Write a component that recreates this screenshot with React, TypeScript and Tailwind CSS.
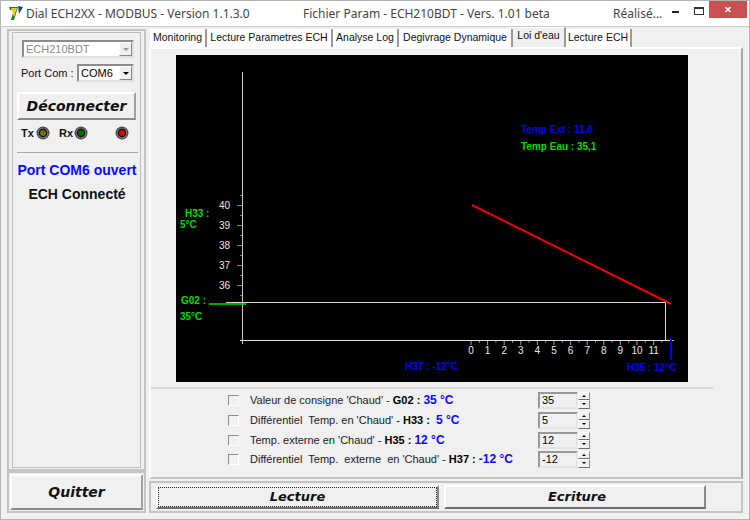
import React from "react";

const uiFont = "font-['Liberation_Sans',sans-serif]";
const raised = "border border-t-white border-l-white border-r-[#8c8c8c] border-b-[#6e6e6e]";
const sunken = "border border-t-[#8c8c8c] border-l-[#8c8c8c] border-r-[#e0e0e0] border-b-[#e0e0e0]";

const tabs = [
  { label: "Monitoring", width: "w-[57px]" },
  { label: "Lecture Parametres ECH", width: "w-[126px]" },
  { label: "Analyse Log", width: "w-[66px]" },
  { label: "Degivrage Dynamique", width: "w-[114px]" },
  { label: "Loi d'eau", width: "w-[53px]", active: true },
  { label: "Lecture ECH", width: "w-[66px]" },
];

const params = [
  { text: "Valeur de consigne 'Chaud' - ", code: "G02 :", gap: " ", value: "35 °C", input: "35", mt: "mt-0" },
  { text: "Différentiel  Temp. en 'Chaud' - ", code: "H33 :", gap: "  ", value: "5 °C", input: "5", mt: "mt-1" },
  { text: "Temp. externe en 'Chaud' - ", code: "H35 :", gap: " ", value: "12 °C", input: "12", mt: "mt-1" },
  { text: "Différentiel  Temp.  externe  en 'Chaud' - ", code: "H37 :", gap: " ", value: "-12 °C", input: "-12", mt: "mt-[3px]" },
];

function Led({ color }: { color: string }) {
  return (
    <svg width="14" height="14" viewBox="0 0 14 14">
      <circle cx="7" cy="7" r="6.5" fill="#4a4a4a" />
      <circle cx="7" cy="7" r="5.2" fill="#8a8a8a" />
      <circle cx="7" cy="7" r="4.4" fill="#111" />
      <circle cx="7" cy="7" r="3" fill={color} />
    </svg>
  );
}

function Combo({ value, disabled, width }: { value: string; disabled?: boolean; width: string }) {
  return (
    <div className={`flex h-[18px] items-center justify-between bg-white ${sunken} border-2 ${width}`}>
      <span className={`pl-0.5 text-[11px] leading-none ${disabled ? "text-[#8a8a8a]" : "text-black"}`}>{value}</span>
      <span className="flex h-[14px] w-[13px] items-center justify-center border border-r-[#888] border-b-[#888] border-t-white border-l-white bg-[#f0f0f0]">
        <span className={`h-0 w-0 border-x-[3px] border-t-[3px] border-x-transparent ${disabled ? "border-t-[#999]" : "border-t-black"}`} />
      </span>
    </div>
  );
}

function Spin({ value }: { value: string }) {
  return (
    <div className="flex h-[17px]">
      <div className="flex w-[40px] items-center border-2 border-t-[#999] border-l-[#999] border-r-[#e4e4e4] border-b-[#e4e4e4] pl-0.5 text-[11px] text-black">
        {value}
      </div>
      <div className="flex w-[12px] flex-col">
        <span className={`flex h-1/2 items-center justify-center bg-[#f0f0f0] ${raised}`}>
          <span className="h-0 w-0 border-x-2 border-b-2 border-x-transparent border-b-black" />
        </span>
        <span className={`flex h-1/2 items-center justify-center bg-[#f0f0f0] ${raised}`}>
          <span className="h-0 w-0 border-x-2 border-t-2 border-x-transparent border-t-black" />
        </span>
      </div>
    </div>
  );
}

function Chart() {
  const yMajor = [
    { y: 150, label: "40" },
    { y: 170, label: "39" },
    { y: 190, label: "38" },
    { y: 210, label: "37" },
    { y: 230, label: "36" },
  ];
  const yMinor = [140, 160, 180, 200, 220, 240];
  const xLabels = Array.from({ length: 12 }, (_, i) => i);
  const xAt = (i: number) => 295 + i * 16.6;

  return (
    <svg width="512" height="327" viewBox="0 0 512 327" className="block bg-black">
      {/* axes */}
      <line x1="66.5" y1="17" x2="66.5" y2="289" stroke="#c8c8c8" />
      <line x1="64" y1="285.5" x2="498" y2="285.5" stroke="#e0e0e0" />

      {yMajor.map((t) => (
        <g key={t.y}>
          <line x1="61" y1={t.y + 0.5} x2="66" y2={t.y + 0.5} stroke="#808080" />
          <text x="43" y={t.y + 4} className="fill-[#e8e8e8] text-[10px]">
            {t.label}
          </text>
        </g>
      ))}
      {yMinor.map((y) => (
        <line key={y} x1="64" y1={y + 0.5} x2="66" y2={y + 0.5} stroke="#808080" />
      ))}

      {xLabels.map((i) => (
        <g key={i}>
          <line x1={xAt(i)} y1="286" x2={xAt(i)} y2="290" stroke="#a0a0a0" />
          <line x1={xAt(i) + 8.3} y1="286" x2={xAt(i) + 8.3} y2="288" stroke="#808080" />
          <text x={xAt(i)} y="299" textAnchor="middle" className="fill-[#e8e8e8] text-[10px]">
            {i}
          </text>
        </g>
      ))}

      {/* consigne */}
      <line x1="50" y1="247.5" x2="490" y2="247.5" stroke="#d8d8d8" />
      <line x1="489.5" y1="247" x2="489.5" y2="285" stroke="#d8d8d8" />
      <line x1="33" y1="249" x2="70" y2="249" stroke="#00e000" strokeWidth="1.5" />
      <line x1="296" y1="150" x2="495" y2="249" stroke="#f00000" strokeWidth="2" />
      <line x1="495" y1="283" x2="495" y2="305" stroke="#0000f0" strokeWidth="2" />

      <g className="text-[10px] font-bold">
        <text x="9" y="162" className="fill-[#00d800]">H33 :</text>
        <text x="4" y="173" className="fill-[#00d800]">5°C</text>
        <text x="5" y="249" className="fill-[#00d800]">G02 :</text>
        <text x="4" y="265" className="fill-[#00d800]">35°C</text>
        <text x="345" y="78" className="fill-[#0000f0]">Temp Ext : 11,6</text>
        <text x="345" y="95" className="fill-[#00d800]">Temp Eau : 35,1</text>
        <text x="229" y="315" className="fill-[#0000f0]">H37 : -12°C</text>
        <text x="451" y="316" className="fill-[#0000f0]">H35 : 12°C</text>
      </g>
    </svg>
  );
}

export default function App() {
  return (
    <div className={`flex h-[520px] w-[750px] flex-col overflow-hidden border border-[#b4b4b4] bg-white text-[#222] ${uiFont}`}>
      {/* title bar */}
      <div className="flex h-[25px] shrink-0 items-start font-['Noto_Sans',sans-serif] text-[12px] leading-[25px] text-[#444]">
        <svg width="16" height="16" viewBox="0 0 16 16" className="ml-[7px] mt-[4px] shrink-0">
          <path d="M1 2h9L6 15H3l3-10H2z" fill="#1f7f1f" />
          <path d="M3 3h6L6 12z" fill="#e8d020" />
          <path d="M10 1l5 1-4 7z" fill="#2040a0" />
        </svg>
        <span className="ml-[2px] w-[277px] shrink-0 whitespace-nowrap">Dial ECH2XX - MODBUS - Version 1.1.3.0</span>
        <span className="w-[310px] shrink-0 whitespace-nowrap">Fichier Param - ECH210BDT - Vers. 1.01 beta</span>
        <span className="w-[50px] shrink-0 whitespace-nowrap">Réalisé...</span>
        <div className="ml-[9px] flex items-start">
          <span className="mt-[10px] h-0.5 w-[7px] bg-[#222]" />
          <span className="ml-[15px] mt-[6px] h-[8px] w-[10px] border border-t-2 border-[#333]" />
          <span className="ml-[5px] flex h-[17px] w-[38px] items-center justify-center bg-[#c75050] text-[13px] font-bold leading-none text-white">
            ×
          </span>
        </div>
      </div>

      {/* body */}
      <div className="flex min-h-0 flex-1 border-t border-[#c8c8c8] bg-[#f0f0f0] px-[6px] pb-[6px]">
        {/* left column */}
        <div className="flex w-[139px] shrink-0 flex-col pt-[2px]">
          <div className="flex flex-1 flex-col border-2 border-[#c4c4c4] px-[3px] py-px">
            <div className="flex flex-1 flex-col border border-[#bdbdbd] pl-[4px] pr-[4px] pt-[7px]">
              <div className="ml-[5px]">
                <Combo value="ECH210BDT" disabled width="w-[112px]" />
              </div>
              <div className="mt-[6px] flex items-center">
                <span className="ml-1 w-[56px] text-[11px] text-[#111]">Port Com :</span>
                <Combo value="COM6" width="w-[57px]" />
              </div>
              <button className="mt-[10px] flex h-[28px] w-[119px] items-center justify-center border-2 border-b-[#8a8a8a] border-l-white border-r-[#a0a0a0] border-t-white bg-[#f0f0f0] font-['DejaVu_Sans',sans-serif] text-[14px] font-bold italic text-[#111]">
                Déconnecter
              </button>
              <div className="mt-[5px] flex items-center text-[11px] font-bold text-[#111]">
                <span className="ml-[4px] w-[15px]">Tx</span>
                <Led color="#6e6e00" />
                <span className="ml-[9px] w-[15px]">Rx</span>
                <Led color="#006a00" />
                <span className="ml-[27px]">
                  <Led color="#e00010" />
                </span>
              </div>
              <div className="mt-[10px] h-px w-[121px] bg-[#a8a8a8]" />
              <div className="mt-[7px] w-[120px] whitespace-nowrap text-center text-[14px] font-bold leading-5 text-[#0a0aff]">
                Port COM6 ouvert
              </div>
              <div className="mt-[4px] w-[120px] whitespace-nowrap text-center text-[14px] font-bold leading-5 text-[#111]">
                ECH Connecté
              </div>
            </div>
          </div>
          <div className="flex h-[42px] shrink-0 border-2 border-[#c4c4c4] p-px">
            <button className="flex-1 border-2 border-b-[#8a8a8a] border-l-white border-r-[#a0a0a0] border-t-white bg-[#f0f0f0] font-['DejaVu_Sans',sans-serif] text-[14px] font-bold italic text-[#111]">
              Quitter
            </button>
          </div>
        </div>

        {/* right column */}
        <div className="ml-[3px] flex min-w-0 flex-1 flex-col pt-[2px]">
          <div className="flex h-[18px] shrink-0 items-end pl-px">
            {tabs.map((t) => (
              <span
                key={t.label}
                className={`flex ${t.width} shrink-0 items-center justify-center whitespace-nowrap border-r-2 border-[#9a9a9a] text-[10.5px] text-[#111] ${t.active ? "h-[20px] border-t border-t-white bg-[#f0f0f0] pb-1" : "h-[18px] bg-white"}`}
              >
                {t.label}
              </span>
            ))}
          </div>

          <div className="flex h-[432px] shrink-0 flex-col border-2 border-b-[#c4c4c4] border-l-white border-r-[#a8a8a8] border-t-white">
            <div className="ml-[25px] mt-[6px]">
              <Chart />
            </div>
            <div className="mt-[5px] h-0.5 w-[562px] bg-[#d8d8d8]" />
            <div className="mt-[3px] flex flex-col pl-[77px]">
              {params.map((p) => (
                <div key={p.code} className={`flex h-[16px] items-center ${p.mt}`}>
                  <span className="h-[11px] w-[11px] shrink-0 border border-b-white border-l-[#8e8e8e] border-r-white border-t-[#8e8e8e] bg-[#f0f0f0]" />
                  <span className="ml-[11px] w-[288px] shrink-0 whitespace-pre text-[11px] text-[#222]">
                    {p.text}
                    <b className="text-black">{p.code}</b>
                    {p.gap}
                    <b className="text-[12px] text-[#0a0aff]">{p.value}</b>
                  </span>
                  <Spin value={p.input} />
                </div>
              ))}
            </div>
          </div>

          <div className="mt-[2px] flex flex-1 items-start border-2 border-[#c4c4c4] pl-[5px] pt-[2px]">
            <div className="flex h-[24px] w-[283px] items-center justify-center border-2 border-b-[#6e6e6e] border-l-white border-r-[#8a8a8a] border-t-white bg-[#f0f0f0] font-['DejaVu_Sans',sans-serif] text-[13px] font-bold italic text-[#111] outline-1 -outline-offset-3 outline-dotted outline-[#222]">
              Lecture
            </div>
            <div className="ml-[5px] flex h-[24px] w-[262px] items-center justify-center border-2 border-b-[#6e6e6e] border-l-white border-r-[#8a8a8a] border-t-white bg-[#f0f0f0] pl-1 font-['DejaVu_Sans',sans-serif] text-[13px] font-bold italic text-[#111]">
              Ecriture
            </div>
          </div>
        </div>
      </div>
    </div>
  );
}
